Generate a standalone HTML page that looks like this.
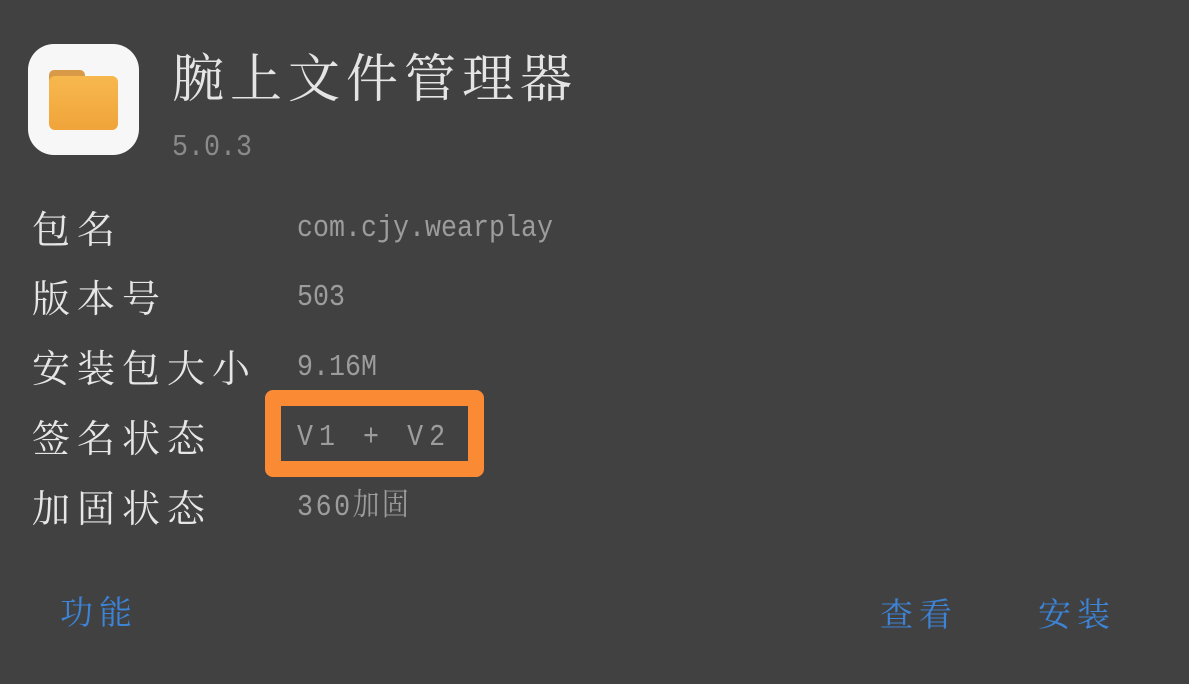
<!DOCTYPE html>
<html><head><meta charset="utf-8"><style>
body{margin:0;width:1189px;height:684px;background:#414141;position:relative;overflow:hidden;font-family:"Liberation Sans","Noto Serif CJK SC","Noto Sans CJK SC",sans-serif}
.a{position:absolute;white-space:nowrap;line-height:1}
.lab{left:32px;font-size:38px;color:#e6e6e6;font-family:"Liberation Serif","Noto Serif CJK SC",serif;letter-spacing:7px}
.val{left:297px;font-size:31px;color:#9c9c9c;font-family:"Liberation Mono","Noto Serif CJK SC",monospace;transform:scaleX(.86);transform-origin:left}
.btn{font-size:33px;color:#3d83d6;font-family:"Liberation Serif","Noto Serif CJK SC",serif;letter-spacing:6px}
</style></head><body>
<div class="a" style="left:28px;top:44px;width:111px;height:111px;background:#f7f7f7;border-radius:26px"></div>
<div class="a" style="left:49px;top:70px;width:36px;height:20px;background:#d99a47;border-radius:5px"></div>
<div class="a" style="left:49px;top:76px;width:69px;height:54px;background:linear-gradient(#f7b84e,#f0a43a);border-radius:6px"></div>
<div class="a" style="left:172px;top:55px;font-size:52px;color:#e4e4e4;font-family:'Liberation Serif','Noto Serif CJK SC',serif;letter-spacing:6px">腕上文件管理器</div>
<div class="a val" style="left:172px;top:132px;color:#8a8a8a">5.0.3</div>
<div class="a lab" style="top:212px">包名</div>
<div class="a val" style="top:213px">com.cjy.wearplay</div>
<div class="a lab" style="top:281px">版本号</div>
<div class="a val" style="top:282px">503</div>
<div class="a lab" style="top:351px">安装包大小</div>
<div class="a val" style="top:352px">9.16M</div>
<div class="a lab" style="top:421px">签名状态</div>
<div class="a" style="left:265px;top:390px;width:187px;height:55px;border:16px solid #fb8a35;border-radius:8px"></div>
<div class="a val" style="top:422px;letter-spacing:7px">V1 + V2</div>
<div class="a lab" style="top:491px">加固状态</div>
<div class="a val" style="top:492px;letter-spacing:3px">360加固</div>
<div class="a btn" style="left:60px;top:598px">功能</div>
<div class="a btn" style="left:880px;top:600px">查看</div>
<div class="a btn" style="left:1038px;top:600px">安装</div>
</body></html>
